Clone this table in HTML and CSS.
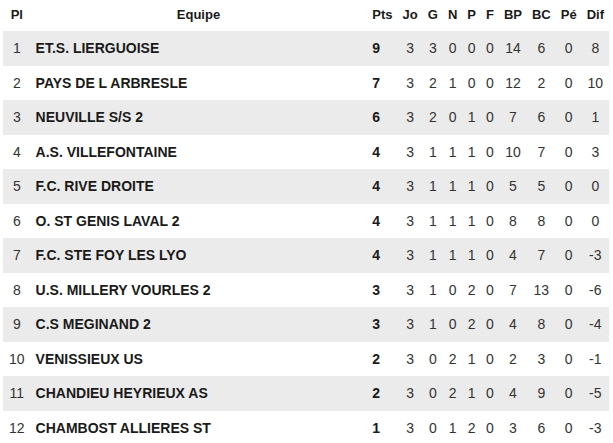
FILE: index.html
```html
<!DOCTYPE html>
<html lang="fr">
<head>
<meta charset="utf-8">
<title>Classement</title>
<link rel="stylesheet" href="styles.css">
</head>
<body>
<table class="standings">
  <thead>
    <tr>
      <th class="pl">Pl</th>
      <th class="team">Equipe</th>
      <th class="pts">Pts</th>
      <th>Jo</th><th>G</th><th>N</th><th>P</th><th>F</th><th>BP</th><th>BC</th><th>Pé</th><th>Dif</th>
    </tr>
  </thead>
  <tbody>
    <tr><td class="pl">1</td><td class="team">ET.S. LIERGUOISE</td><td class="pts">9</td><td>3</td><td>3</td><td>0</td><td>0</td><td>0</td><td>14</td><td>6</td><td>0</td><td>8</td></tr>
    <tr><td class="pl">2</td><td class="team">PAYS DE L ARBRESLE</td><td class="pts">7</td><td>3</td><td>2</td><td>1</td><td>0</td><td>0</td><td>12</td><td>2</td><td>0</td><td>10</td></tr>
    <tr><td class="pl">3</td><td class="team">NEUVILLE S/S 2</td><td class="pts">6</td><td>3</td><td>2</td><td>0</td><td>1</td><td>0</td><td>7</td><td>6</td><td>0</td><td>1</td></tr>
    <tr><td class="pl">4</td><td class="team">A.S. VILLEFONTAINE</td><td class="pts">4</td><td>3</td><td>1</td><td>1</td><td>1</td><td>0</td><td>10</td><td>7</td><td>0</td><td>3</td></tr>
    <tr><td class="pl">5</td><td class="team">F.C. RIVE DROITE</td><td class="pts">4</td><td>3</td><td>1</td><td>1</td><td>1</td><td>0</td><td>5</td><td>5</td><td>0</td><td>0</td></tr>
    <tr><td class="pl">6</td><td class="team">O. ST GENIS LAVAL 2</td><td class="pts">4</td><td>3</td><td>1</td><td>1</td><td>1</td><td>0</td><td>8</td><td>8</td><td>0</td><td>0</td></tr>
    <tr><td class="pl">7</td><td class="team">F.C. STE FOY LES LYO</td><td class="pts">4</td><td>3</td><td>1</td><td>1</td><td>1</td><td>0</td><td>4</td><td>7</td><td>0</td><td>-3</td></tr>
    <tr><td class="pl">8</td><td class="team">U.S. MILLERY VOURLES 2</td><td class="pts">3</td><td>3</td><td>1</td><td>0</td><td>2</td><td>0</td><td>7</td><td>13</td><td>0</td><td>-6</td></tr>
    <tr><td class="pl">9</td><td class="team">C.S MEGINAND 2</td><td class="pts">3</td><td>3</td><td>1</td><td>0</td><td>2</td><td>0</td><td>4</td><td>8</td><td>0</td><td>-4</td></tr>
    <tr><td class="pl">10</td><td class="team">VENISSIEUX US</td><td class="pts">2</td><td>3</td><td>0</td><td>2</td><td>1</td><td>0</td><td>2</td><td>3</td><td>0</td><td>-1</td></tr>
    <tr><td class="pl">11</td><td class="team">CHANDIEU HEYRIEUX AS</td><td class="pts">2</td><td>3</td><td>0</td><td>2</td><td>1</td><td>0</td><td>4</td><td>9</td><td>0</td><td>-5</td></tr>
    <tr><td class="pl">12</td><td class="team">CHAMBOST ALLIERES ST</td><td class="pts">1</td><td>3</td><td>0</td><td>1</td><td>2</td><td>0</td><td>3</td><td>6</td><td>0</td><td>-3</td></tr>
  </tbody>
</table>
</body>
</html>
```

FILE: styles.css
```css
html, body {
  margin: 0;
  padding: 0;
  background: #ffffff;
}

body {
  font-family: "Liberation Sans", Arial, sans-serif;
  color: #333333;
}

.standings {
  margin-left: 3px;
  width: 606px;
  border-collapse: collapse;
  border-spacing: 0;
}

.standings th {
  height: 29px;
  padding: 0 5px 2px;
  font-size: 13px;
  font-weight: bold;
  color: #1a1a1a;
  text-align: center;
  vertical-align: middle;
}

.standings td {
  height: 34.5px;
  padding: 0 5px;
  font-size: 14px;
  text-align: center;
  vertical-align: middle;
  color: #333333;
}

.standings tbody tr:nth-child(odd) {
  background: #ebebeb;
}

.standings th.pl,
.standings td.pl {
  padding-left: 6px;
}

.standings th.pts,
.standings td.pts {
  text-align: left;
}

.standings td.pts {
  font-weight: bold;
  color: #1a1a1a;
}

.standings td.team {
  width: 100%;
  padding-left: 6px;
  text-align: left;
  font-weight: bold;
  color: #1a1a1a;
}
```
